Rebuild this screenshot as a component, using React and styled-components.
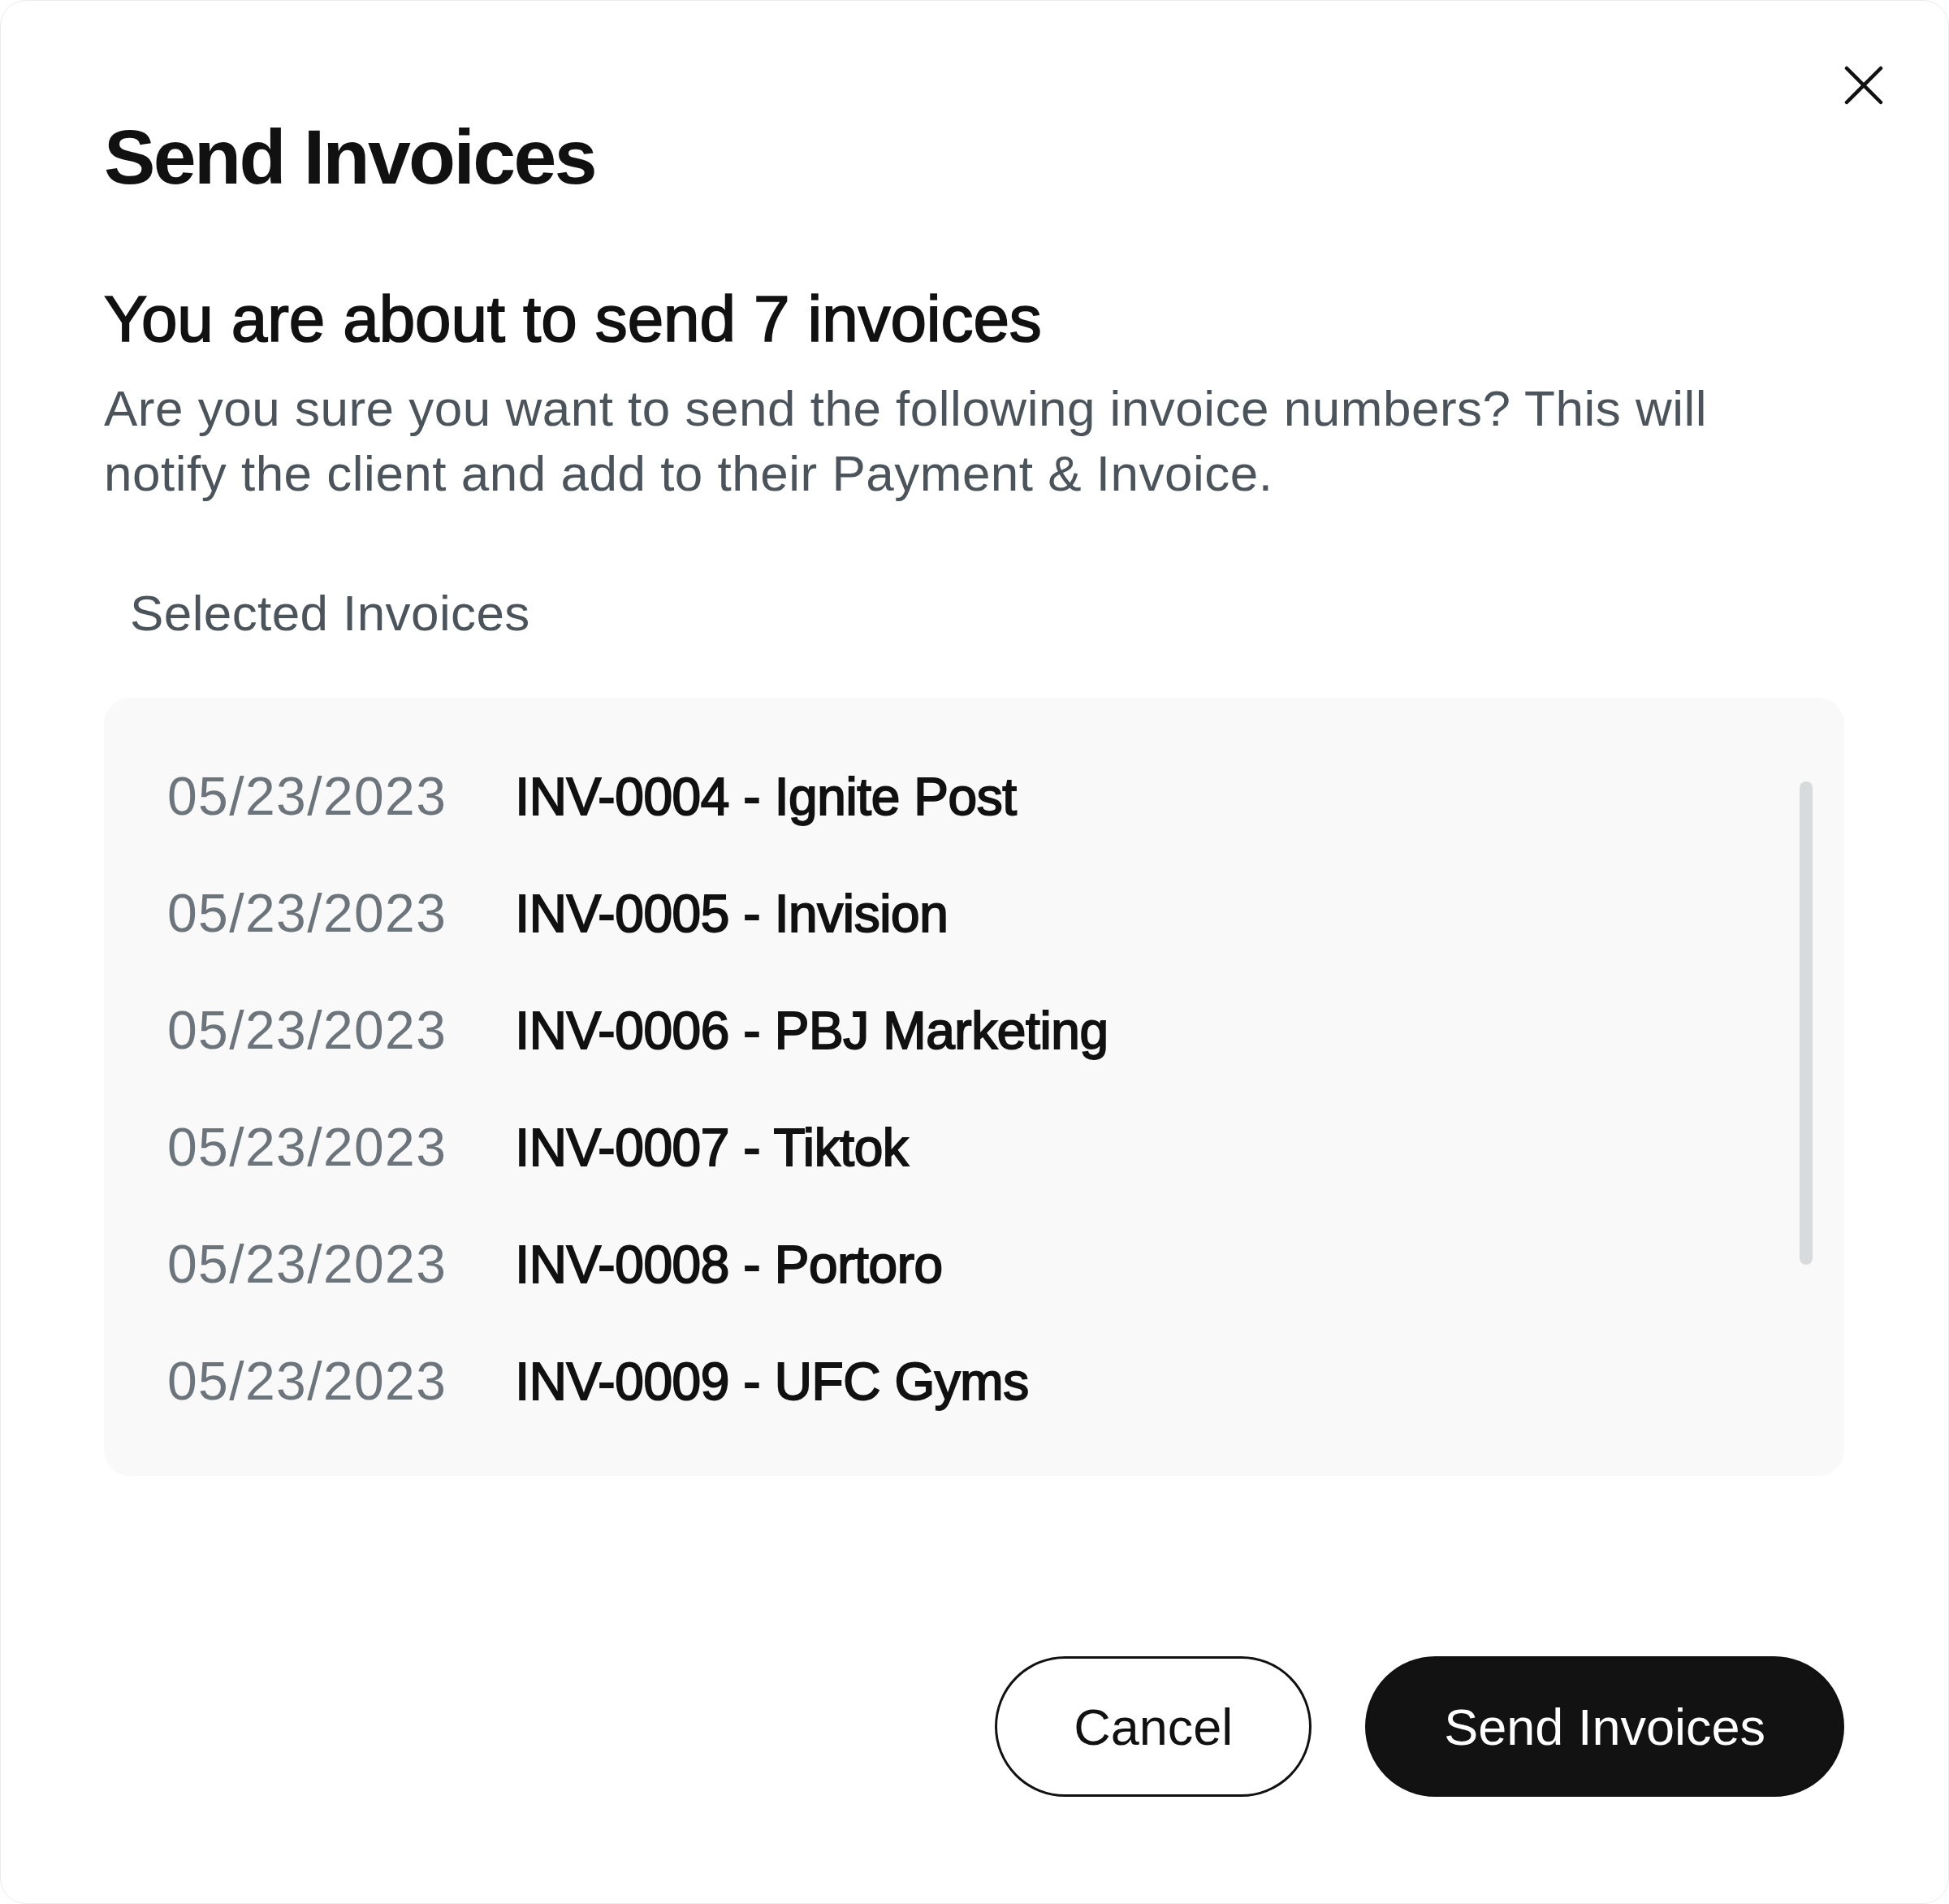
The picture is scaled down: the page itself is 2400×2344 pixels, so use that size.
import React from 'react';
import styled, { createGlobalStyle } from 'styled-components';

const GlobalStyle = createGlobalStyle`
    html, body {
        margin: 0;
        padding: 0;
        background: #ffffff;
    }
    body {
        font-family: 'Liberation Sans', Arial, sans-serif;
    }
`;

const invoices = [
    { date: '05/23/2023', number: 'INV-0004', client: 'Ignite Post' },
    { date: '05/23/2023', number: 'INV-0005', client: 'Invision' },
    { date: '05/23/2023', number: 'INV-0006', client: 'PBJ Marketing' },
    { date: '05/23/2023', number: 'INV-0007', client: 'Tiktok' },
    { date: '05/23/2023', number: 'INV-0008', client: 'Portoro' },
    { date: '05/23/2023', number: 'INV-0009', client: 'UFC Gyms' },
];

const Modal = styled.div`
    position: relative;
    box-sizing: border-box;
    width: 2400px;
    height: 2344px;
    padding: 145px 128px 0 127px;
    background: #ffffff;
    border: 1px solid #ececec;
    border-radius: 32px;
    display: flex;
    flex-direction: column;
`;

const CloseButton = styled.button`
    position: absolute;
    top: 79px;
    right: 79px;
    width: 50px;
    height: 50px;
    padding: 0;
    border: none;
    background: transparent;
    cursor: pointer;
    display: flex;
    align-items: center;
    justify-content: center;
`;

const Title = styled.h1`
    margin: 0;
    font-size: 95px;
    line-height: 95px;
    font-weight: 700;
    letter-spacing: -2.6px;
    color: #111111;
`;

const Subtitle = styled.h2`
    margin: 112px 0 0 0;
    font-size: 80px;
    line-height: 80px;
    font-weight: 400;
    letter-spacing: -0.1px;
    color: #111111;
    -webkit-text-stroke: 1.7px #111111;
`;

const Description = styled.p`
    margin: 30px 0 0 0;
    max-width: 2060px;
    font-size: 62px;
    line-height: 80px;
    letter-spacing: 0.5px;
    color: #4a545a;
`;

const SectionLabel = styled.div`
    margin-top: 92px;
    padding-left: 32px;
    font-size: 62px;
    line-height: 80px;
    letter-spacing: 0.4px;
    color: #4a545a;
`;

const ListBox = styled.div`
    position: relative;
    box-sizing: border-box;
    margin-top: 64px;
    height: 958px;
    padding: 49px 0 0 78px;
    background: #f9f9f9;
    border-radius: 32px;
    overflow: hidden;
`;

const ScrollThumb = styled.div`
    position: absolute;
    top: 103px;
    right: 39px;
    width: 16px;
    height: 595px;
    border-radius: 8px;
    background: #d9dadb;
`;

const Row = styled.div`
    display: flex;
    align-items: baseline;
    gap: 84px;
    height: 144px;
    line-height: 144px;
`;

const DateText = styled.span`
    font-size: 66px;
    letter-spacing: 1.4px;
    color: #6c757b;
`;

const InvoiceText = styled.span`
    font-size: 64px;
    letter-spacing: -0.4px;
    color: #111111;
    -webkit-text-stroke: 1.9px #111111;
`;

const Footer = styled.div`
    margin-top: 222px;
    display: flex;
    justify-content: flex-end;
    gap: 66px;
`;

const Button = styled.button`
    box-sizing: border-box;
    height: 173px;
    padding: 0 94px;
    border-radius: 87px;
    border: 3px solid #111111;
    background: ${(p) => (p.$primary ? '#121212' : '#ffffff')};
    color: ${(p) => (p.$primary ? '#ffffff' : '#111111')};
    font-family: 'Liberation Sans', Arial, sans-serif;
    font-size: 63px;
    cursor: pointer;
`;

function CloseIcon() {
    return (
        <svg width="50" height="50" viewBox="0 0 50 50" fill="none">
            <path d="M4 4 L46 46 M46 4 L4 46" stroke="#111111" strokeWidth="4.5" strokeLinecap="round" />
        </svg>
    );
}

export default function App() {
    return (
        <>
            <GlobalStyle />
            <Modal>
                <CloseButton aria-label="Close">
                    <CloseIcon />
                </CloseButton>
                <Title>Send Invoices</Title>
                <Subtitle>You are about to send 7 invoices</Subtitle>
                <Description>
                    Are you sure you want to send the following invoice numbers? This will notify the client and
                    add to their Payment &amp; Invoice.
                </Description>
                <SectionLabel>Selected Invoices</SectionLabel>
                <ListBox>
                    {invoices.map((item) => (
                        <Row key={item.number}>
                            <DateText>{item.date}</DateText>
                            <InvoiceText>
                                {item.number} - {item.client}
                            </InvoiceText>
                        </Row>
                    ))}
                    <ScrollThumb />
                </ListBox>
                <Footer>
                    <Button>Cancel</Button>
                    <Button $primary>Send Invoices</Button>
                </Footer>
            </Modal>
        </>
    );
}
